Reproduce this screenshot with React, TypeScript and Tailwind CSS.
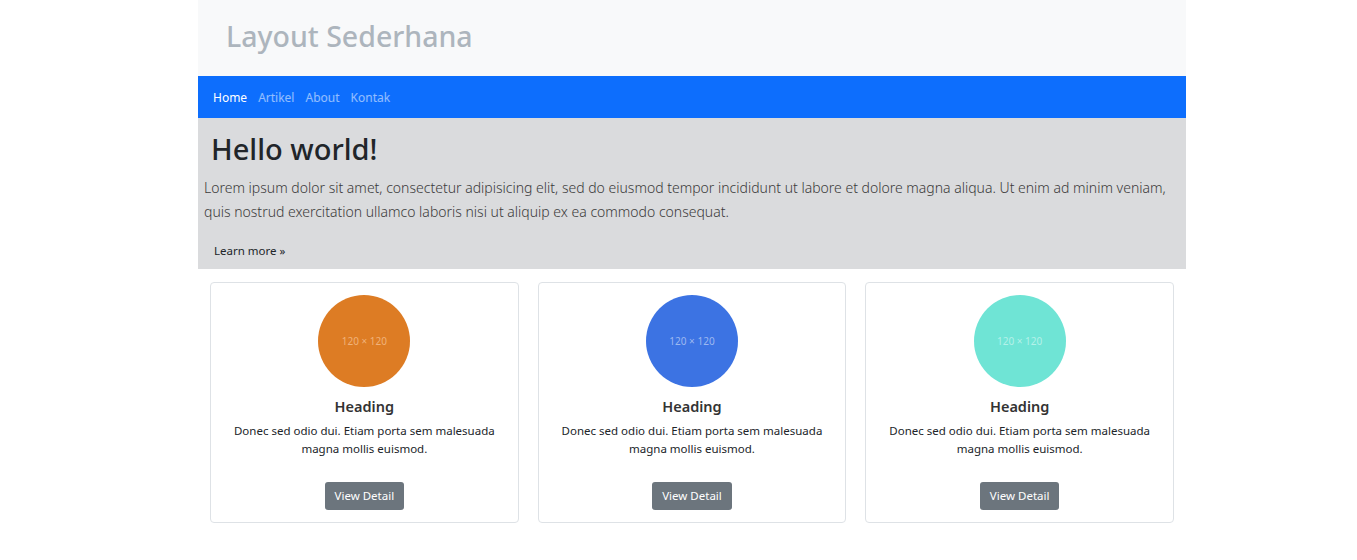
import React from "react";

const cards = [
  { color: "bg-[#dd7c24]", text: "text-[#f0b27a]" },
  { color: "bg-[#3c73e3]", text: "text-[#9cb8f0]" },
  { color: "bg-[#6fe4d5]", text: "text-[#b4f1e9]" },
];

export default function App() {
  return (
    <div className="w-full bg-white" style={{ fontFamily: '"Noto Sans", "Open Sans", sans-serif' }}>
      <div className="ml-[198px] w-[988px]">
        <header className="h-[76px] bg-[#f8f9fa] flex items-center pl-[28px] pb-[4px]">
          <h1 className="text-[28.5px] font-medium text-[#adb5bd] leading-none">Layout Sederhana</h1>
        </header>
        <nav className="h-[42px] bg-[#0d6efd] flex items-center pl-[15px] gap-[11px] text-[12px] pt-[2px]">
          <a className="text-white">Home</a>
          <a className="text-white/55">Artikel</a>
          <a className="text-white/55">About</a>
          <a className="text-white/55">Kontak</a>
        </nav>
        <section className="bg-[#dadbdd] h-[151px] pl-[6px] pr-[12px] pt-[13px]">
          <h2 className="text-[29px] font-medium text-[#212529] leading-[36px] pl-[7px]">Hello world!</h2>
          <p className="mt-[9px] text-[14px] font-light text-[#3a3a3a] leading-[24px]">
            Lorem ipsum dolor sit amet, consectetur adipisicing elit, sed do eiusmod tempor incididunt ut labore et dolore magna aliqua. Ut enim ad minim veniam, quis nostrud exercitation ullamco laboris nisi ut aliquip ex ea commodo consequat.
          </p>
          <a className="block mt-[18px] pl-[10px] text-[11.5px] text-[#212529]">Learn more »</a>
        </section>
        <div className="grid grid-cols-3 gap-[19px] px-[12px] pt-[13px]">
          {cards.map((c, i) => (
            <div key={i} className="h-[241px] border border-[#dee2e6] rounded-[4px] flex flex-col items-center pt-[12px]">
              <div className={`w-[92px] h-[92px] rounded-full ${c.color} flex items-center justify-center`}>
                <span className={`text-[10px] ${c.text}`}>120 × 120</span>
              </div>
              <h3 className="mt-[9px] text-[14.5px] font-semibold text-[#333] leading-[20px]">Heading</h3>
              <p className="mt-[6px] text-[11.5px] text-[#212529] leading-[18px] text-center px-[14px]">
                Donec sed odio dui. Etiam porta sem malesuada magna mollis euismod.
              </p>
              <button className="mt-[24px] h-[28px] px-[10px] bg-[#6c757d] text-white text-[11.5px] rounded-[3px]">View Detail</button>
            </div>
          ))}
        </div>
      </div>
    </div>
  );
}
